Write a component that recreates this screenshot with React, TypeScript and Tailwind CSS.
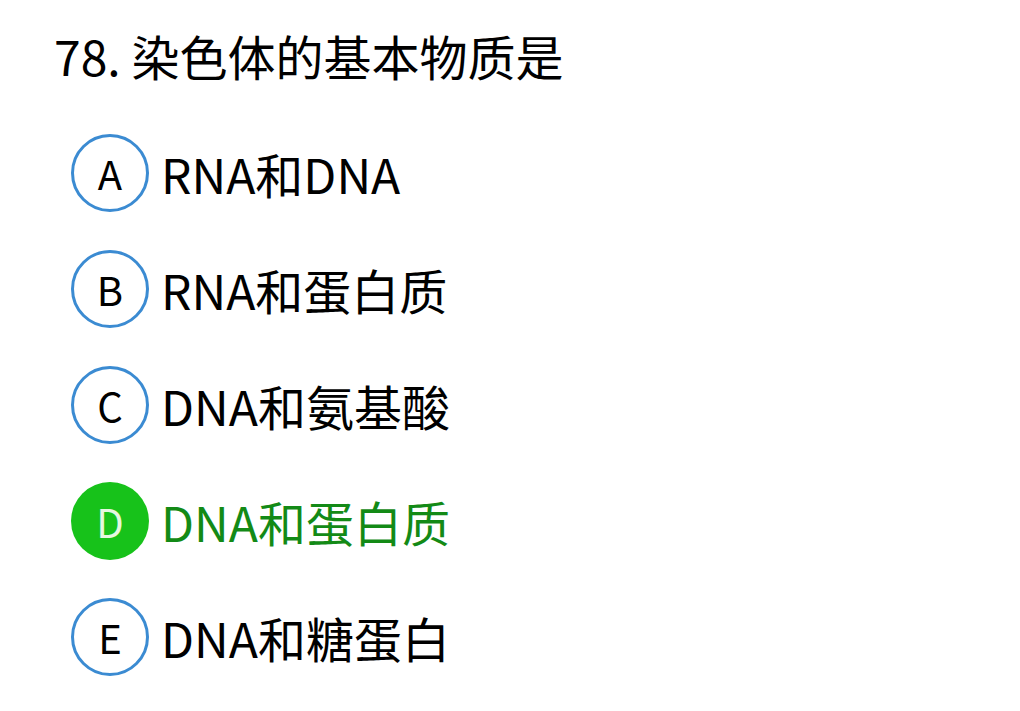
const options = [
  { key: 'A', text: 'RNA和DNA' },
  { key: 'B', text: 'RNA和蛋白质' },
  { key: 'C', text: 'DNA和氨基酸' },
  { key: 'D', text: 'DNA和蛋白质', correct: true },
  { key: 'E', text: 'DNA和糖蛋白' },
];

export default function App() {
  return (
    <div className="w-[1020px] h-[711px] bg-white overflow-hidden font-['Noto_Sans_CJK_SC','Noto_Sans',sans-serif] text-black">
      <div className="pl-[54px] pt-[23px]">
        <h1 className="text-[48px] leading-[64px] font-normal">78. 染色体的基本物质是</h1>
      </div>
      <div className="pl-[71px] pt-[47px] flex flex-col gap-[38px]">
        {options.map((o) => (
          <div key={o.key} className="flex items-center gap-[12px]">
            {o.correct ? (
              <div className="w-[78px] h-[78px] rounded-full bg-[#17c21a] flex items-center justify-center text-[40px] text-[#e6f7e0]">
                {o.key}
              </div>
            ) : (
              <div className="w-[78px] h-[78px] rounded-full border-[3px] border-[#3b8bd2] flex items-center justify-center text-[40px]">
                {o.key}
              </div>
            )}
            <span className={o.correct ? 'text-[48px] leading-[64px] text-[#138a16]' : 'text-[48px] leading-[64px]'}>{o.text}</span>
          </div>
        ))}
      </div>
    </div>
  );
}
